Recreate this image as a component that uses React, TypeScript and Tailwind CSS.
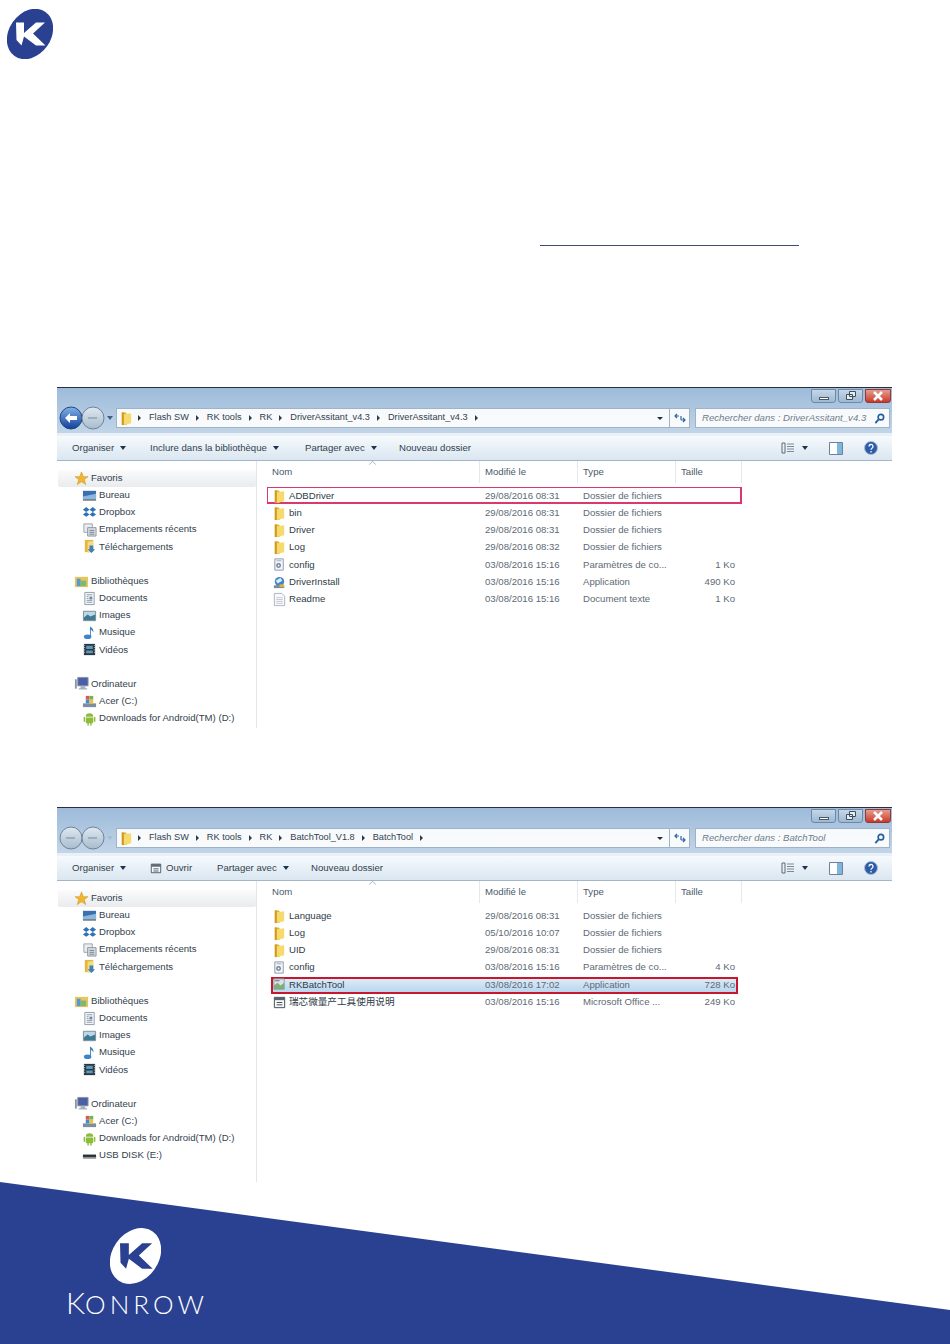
import type { ReactNode } from "react";

type IconName =
  | "folder" | "config" | "install" | "readme" | "exe" | "office"
  | "star" | "desktop" | "dropbox" | "recent" | "downloads"
  | "library" | "document" | "images" | "music" | "video"
  | "computer" | "drive" | "android" | "usb";

function Icon({ name }: { name: IconName }) {
  const shapes: Record<IconName, ReactNode> = {
    folder: (
      <>
        <path d="M3 1.500h4l1 1V15H3z" fill="#e3ae2c" />
        <path d="M5 3.500l8-1V13l-8 2z" fill="#f6da6e" />
        <path d="M3 1.500h2V15H3z" fill="#cf9a1c" />
      </>
    ),
    config: (
      <>
        <path d="M3 2h9v12H3z" fill="#f4f6f9" stroke="#8d98a6" />
        <circle cx="7" cy="9" r="2.600" fill="#6f83a0" />
        <circle cx="7" cy="9" r="1" fill="#fff" />
        <path d="M5 4h5" stroke="#9fabb8" />
      </>
    ),
    install: (
      <>
        <circle cx="8" cy="7" r="5" fill="#3f86c6" />
        <path d="M4 6l5-3 2 3-5 3z" fill="#dcecf8" />
        <path d="M2 11h11v3H2z" fill="#7a8b97" />
        <path d="M8 10h5v3H8z" fill="#d6b447" />
      </>
    ),
    readme: (
      <>
        <path d="M2.500 1.500h8l3 3v10h-11z" fill="#f8f9fb" stroke="#a9b2bd" />
        <path d="M4.500 6h7M4.500 8h7M4.500 10h7M4.500 12h7" stroke="#c3cad2" />
      </>
    ),
    exe: (
      <>
        <path d="M2 2h11v11H2z" fill="#d8e3ea" stroke="#8f9ba5" />
        <path d="M2 9l4-3 3 3 4-3v7H2z" fill="#7fae7b" />
        <path d="M3 4h5" stroke="#5d6b78" />
      </>
    ),
    office: (
      <>
        <path d="M2.500 2.500h11v11h-11z" fill="#f7f7f7" stroke="#3d4650" />
        <path d="M2.500 2.500h11v3h-11z" fill="#59636e" />
        <path d="M5 8h6M5 10.500h6" stroke="#3d4650" />
      </>
    ),
    star: <path d="M8 1l2 5h5l-4 3 1.500 5.500L8 11.500 3.500 14.500 5 9 1 6h5z" fill="#f0b62e" stroke="#c98a1a" strokeWidth="0.500" />,
    desktop: (
      <>
        <path d="M1 3h14v9H1z" fill="#3c6fae" />
        <path d="M1 9l14-3v6H1z" fill="#8db7dd" />
        <path d="M1 12h14v1.500H1z" fill="#5b6b7a" />
      </>
    ),
    dropbox: <path d="M4.500 2L1 5l3.500 2.500L1 10l3.500 2.500L8 10l3.500 2.500L15 10l-3.500-2.500L15 5l-3.500-3L8 5zM8 5l3.500 2.500L8 10 4.500 7.500z" fill="#2f72b8" fillRule="evenodd" />,
    recent: (
      <>
        <path d="M2 2h9v9H2z" fill="#e9edf0" stroke="#99a3ad" />
        <path d="M6 6h9v9H6z" fill="#d5dbe0" stroke="#8b96a0" />
        <path d="M8 9h5M8 11h5M8 13h5" stroke="#79858f" />
      </>
    ),
    downloads: (
      <>
        <path d="M3 1h9v13H3z" fill="#e4b840" />
        <path d="M6 3l6-1v11l-6 2z" fill="#f5dc80" />
        <path d="M8 7h4v4h2l-4 4-4-4h2z" fill="#3f80bf" />
      </>
    ),
    library: (
      <>
        <path d="M1 3h14v11H1z" fill="#e7c65c" />
        <path d="M3 5h4v8H3z" fill="#5a97cf" />
        <path d="M7 7h6v6H7z" fill="#7db77a" />
      </>
    ),
    document: (
      <>
        <path d="M3 1.500h10v13H3z" fill="#f2f5f8" stroke="#8e9aa8" />
        <path d="M5 4h6M5 6h2M5 8h2M5 10h6M5 12h6" stroke="#8e9aa8" />
        <path d="M8 6h3v3H8z" fill="#6488b0" />
      </>
    ),
    images: (
      <>
        <path d="M1.500 3.500h13v10h-13z" fill="#bcd7ea" stroke="#7d8b98" />
        <path d="M2 10l4-3 3 2 5-2v6H2z" fill="#3f7b8f" />
      </>
    ),
    music: (
      <>
        <ellipse cx="6" cy="12.500" rx="4" ry="2.500" fill="#3d85c4" />
        <path d="M8.500 12V1.500c2 1 4.500 3 3.500 6.500-.5-1.500-1.500-2.500-2.500-3V12z" fill="#3d85c4" />
      </>
    ),
    video: (
      <>
        <path d="M2 2h12v12H2z" fill="#2b3644" />
        <path d="M4.500 4h7v3.500h-7zM4.500 9h7v3h-7z" fill="#5c9ab8" />
        <path d="M2.800 3v10M13.200 3v10" stroke="#cfd7de" strokeDasharray="1 1.500" />
      </>
    ),
    computer: (
      <>
        <path d="M4 1.500h11v9H4z" fill="#4b5fa8" stroke="#8b95a3" />
        <path d="M1 3.500h2v10H1z" fill="#8b95a3" />
        <path d="M7 11h5v2h2v1.500H5V13h2z" fill="#a5aeb9" />
      </>
    ),
    drive: (
      <>
        <path d="M1 10h14v4H1z" fill="#7f8d9c" />
        <path d="M4 2h4v4H4z" fill="#e2574c" />
        <path d="M8 2h4v4H8z" fill="#72b451" />
        <path d="M4 6h4v4H4z" fill="#3f8cd0" />
        <path d="M8 6h4v4H8z" fill="#f0c33c" />
      </>
    ),
    android: (
      <>
        <path d="M4 6a4 3.500 0 0 1 8 0z" fill="#8dbb3a" />
        <path d="M4 6.800h8V12a1 1 0 0 1-1 1H5a1 1 0 0 1-1-1z" fill="#8dbb3a" />
        <path d="M2.500 7v4M13.500 7v4M6.500 13v2M9.500 13v2" stroke="#8dbb3a" strokeWidth="1.500" strokeLinecap="round" />
      </>
    ),
    usb: (
      <>
        <path d="M1 7h14v4H1z" fill="#2b2f33" />
        <path d="M1 9.500h14V11H1z" fill="#8b9298" />
      </>
    ),
  };
  return (
    <svg viewBox="0 0 16 16" className="w-[15px] h-[15px] shrink-0">
      {shapes[name]}
    </svg>
  );
}

function Caret() {
  return <span className="ml-[6px] inline-block border-x-[3.5px] border-t-[4px] border-x-transparent border-t-[#1e3350] align-middle" />;
}

function Crumb({ label }: { label: string }) {
  return (
    <div className="flex items-center">
      {label && <span className="mr-[7px] text-[9.2px]">{label}</span>}
      <span className="border-y-[3px] border-l-[3.5px] border-y-transparent border-l-[#2c3a48]" />
      <span className="w-[8px]" />
    </div>
  );
}

function NavCircle({ active }: { active: boolean }) {
  return (
    <svg viewBox="0 0 24 24" className="w-[24px] h-[24px] -mr-[2px] shrink-0">
      <defs>
        <linearGradient id="backBlue" x1="0" y1="0" x2="0" y2="1">
          <stop offset="0" stopColor="#7fb2e8" />
          <stop offset="1" stopColor="#123f9c" />
        </linearGradient>
        <linearGradient id="navGrey" x1="0" y1="0" x2="0" y2="1">
          <stop offset="0" stopColor="#dfe8f1" />
          <stop offset="1" stopColor="#a9bccd" />
        </linearGradient>
      </defs>
      <circle cx="12" cy="12" r="11" fill={active ? "url(#backBlue)" : "url(#navGrey)"} stroke={active ? "#24477d" : "#6f8398"} />
      {active ? (
        <path d="M6 12l5-5v3h7v4h-7v3z" fill="#fff" />
      ) : (
        <path d="M7 12h9" stroke="#8ea1b4" strokeWidth="1.500" />
      )}
    </svg>
  );
}

const sideGroups: { title: string; icon: IconName; items: [string, IconName][] }[] = [
  {
    title: "Favoris",
    icon: "star",
    items: [
      ["Bureau", "desktop"],
      ["Dropbox", "dropbox"],
      ["Emplacements récents", "recent"],
      ["Téléchargements", "downloads"],
    ],
  },
  {
    title: "Bibliothèques",
    icon: "library",
    items: [
      ["Documents", "document"],
      ["Images", "images"],
      ["Musique", "music"],
      ["Vidéos", "video"],
    ],
  },
  {
    title: "Ordinateur",
    icon: "computer",
    items: [
      ["Acer (C:)", "drive"],
      ["Downloads for Android(TM) (D:)", "android"],
    ],
  },
];

type FileRow = { name: string; icon: IconName; date: string; type: string; size?: string };

type ExplorerProps = {
  backActive: boolean;
  crumbs: string[];
  search: string;
  height: string;
  tools: ReactNode;
  files: FileRow[];
  extraDrive?: boolean;
  highlight: ReactNode;
};

const folderType = "Dossier de fichiers";

function Explorer({ backActive, crumbs, search, height, tools, files, extraDrive, highlight }: ExplorerProps) {
  return (
    <div className={`mx-[57px] w-[835px] shrink-0 flex flex-col text-[9.6px] text-[#33414d] ${height}`}>
      {/* title + address area */}
      <div className="h-[46px] border-t border-[#2c2f38] bg-gradient-to-b from-[#9dbbda] to-[#c2d5e8] flex flex-col">
        <div className="h-[17px] flex justify-end pt-[1px] pr-[1px]">
          <div className="h-[14px] flex gap-[2px]">
            <div className="w-[25px] rounded-b-[3px] border border-[#6c8aa8] bg-gradient-to-b from-[#c5d6e6] to-[#9db9d3] flex items-end justify-center pb-[2px]">
              <span className="w-[10px] h-[3px] bg-white border border-[#47586a]" />
            </div>
            <div className="w-[25px] rounded-b-[3px] border border-[#6c8aa8] bg-gradient-to-b from-[#c5d6e6] to-[#9db9d3] flex items-center justify-center">
              <svg viewBox="0 0 12 10" className="w-[12px] h-[10px]">
                <path d="M4.500 .5h6v5h-6zM1.500 3.500h6v5h-6z" fill="#e6eef5" stroke="#3e4e5f" />
              </svg>
            </div>
            <div className="w-[26px] rounded-b-[3px] border border-[#8e3a38] bg-gradient-to-b from-[#e59b8c] to-[#c8352a] flex items-center justify-center">
              <svg viewBox="0 0 12 10" className="w-[12px] h-[10px]">
                <path d="M2 1l8 8M10 1l-8 8" stroke="#fff" strokeWidth="2.500" />
              </svg>
            </div>
          </div>
        </div>
        <div className="h-[26px] flex items-center pl-[2px] pr-[2px]">
          <NavCircle active={backActive} />
          <NavCircle active={false} />
          <span className={`ml-[4px] mr-[3px] border-x-[3px] border-t-[4px] border-x-transparent ${backActive ? "border-t-[#3c5f86]" : "border-t-[#a8bccf]"}`} />
          <div className="h-[20px] flex-1 flex items-center bg-white/90 border border-[#9fb2c6]">
            <div className="ml-[2px] mr-[4px]">
              <Icon name="folder" />
            </div>
            <Crumb label="" />
            {crumbs.map((c, i) => (
              <Crumb key={c + i} label={c} />
            ))}
            <div className="flex-1" />
            <span className="mr-[6px] border-x-[3px] border-t-[3.5px] border-x-transparent border-t-[#22303e]" />
            <div className="w-[20px] h-full border-l border-[#9fb2c6] flex items-center justify-center">
              <svg viewBox="0 0 12 10" className="w-[12px] h-[10px]">
                <path d="M5 3H1.500M3 1L1 3l2 2" fill="none" stroke="#2d66a5" strokeWidth="1.200" />
                <path d="M7 7h3.500M9 5l2 2-2 2M7 3v4" fill="none" stroke="#2d66a5" strokeWidth="1.200" />
              </svg>
            </div>
          </div>
          <div className="ml-[5px] h-[20px] w-[195px] flex items-center justify-between pl-[6px] pr-[4px] bg-white/90 border border-[#9fb2c6] italic text-[#6f7d8a] whitespace-nowrap">
            <span>{search}</span>
            <svg viewBox="0 0 12 12" className="w-[11px] h-[11px] shrink-0">
              <circle cx="7.500" cy="4.500" r="3" fill="none" stroke="#245e9f" strokeWidth="1.800" />
              <path d="M5 7l-3.500 4" stroke="#245e9f" strokeWidth="2" />
            </svg>
          </div>
        </div>
      </div>
      <div className="h-[3px] bg-[#e9f0f7]" />
      {/* toolbar */}
      <div className="h-[25px] border-b border-[#a3b5c8] bg-gradient-to-b from-[#f6fafd] to-[#dae6f1] flex items-center pl-[15px] pr-[14px]">
        {tools}
        <div className="flex-1" />
        <svg viewBox="0 0 14 12" className="w-[14px] h-[12px]">
          <path d="M1 1h3v10H1z" fill="none" stroke="#5f6b77" />
          <path d="M6 2h7M6 4.500h7M6 7h7M6 9.500h7" stroke="#7d8a97" />
        </svg>
        <span className="mr-[21px] ml-[1px]"><Caret /></span>
        <svg viewBox="0 0 14 13" className="w-[14px] h-[13px] mr-[21px]">
          <path d="M.5.500h13v12H.5z" fill="#fff" stroke="#6d8296" />
          <path d="M8 1h5v11H8z" fill="#7fb6dc" />
        </svg>
        <svg viewBox="0 0 14 14" className="w-[14px] h-[14px]">
          <circle cx="7" cy="7" r="6.500" fill="#2c5ba8" stroke="#a8bdd6" />
          <path d="M5 5.500a2 2 0 1 1 3 1.700c-.7.400-1 .8-1 1.600M7 10v1.500" fill="none" stroke="#fff" strokeWidth="1.300" />
        </svg>
      </div>
      {/* body */}
      <div className="flex-1 flex min-h-0 bg-white">
        <div className="w-[200px] shrink-0 border-r border-[#e4e7ea] pt-[8.5px] pl-[1px]">
          {sideGroups.map((g, i) => (
            <div key={g.title} className="mb-[17px]">
              <div className={`h-[17.2px] flex items-center pl-[16px] gap-[2px] ${i === 0 ? "bg-gradient-to-b from-[#fbfbfb] to-[#e9ebee] rounded-[2px]" : ""}`}>
                <Icon name={g.icon} />
                <span>{g.title}</span>
              </div>
              {g.items.map(([label, icon]) => (
                <div key={label} className="h-[17.2px] flex items-center pl-[24px] gap-[2px]">
                  <Icon name={icon} />
                  <span className="whitespace-nowrap">{label}</span>
                </div>
              ))}
              {extraDrive && g.title === "Ordinateur" && (
                <div className="h-[17.2px] flex items-center pl-[24px] gap-[2px]">
                  <Icon name="usb" />
                  <span>USB DISK (E:)</span>
                </div>
              )}
            </div>
          ))}
        </div>
        <div className="flex-1 relative">
          {/* column headers */}
          <div className="h-[22px] grid grid-cols-[223px_98px_98px_66px] items-stretch text-[#4a5a68]">
            <div className="relative flex items-center pl-[15px] border-r border-[#e6e9ec]">
              Nom
              <svg viewBox="0 0 8 4" className="absolute left-[112px] top-0 w-[7px] h-[4px]">
                <path d="M0 4l4-4 4 4" fill="none" stroke="#9aa9b6" />
              </svg>
            </div>
            <div className="flex items-center pl-[5px] border-r border-[#e6e9ec]">Modifié le</div>
            <div className="flex items-center pl-[5px] border-r border-[#e6e9ec]">Type</div>
            <div className="flex items-center pl-[5px] border-r border-[#e6e9ec]">Taille</div>
          </div>
          <div className="relative mt-[4.5px]">
            {highlight}
            {files.map((f) => (
              <div key={f.name} className="relative h-[17.2px] grid grid-cols-[228px_98px_98px_54px] items-center">
                <div className="flex items-center pl-[15px] gap-[2px] whitespace-nowrap text-[#2f3c48]">
                  <Icon name={f.icon} />
                  <span>{f.name}</span>
                </div>
                <span className="text-[#5e6a75]">{f.date}</span>
                <span className="text-[#5e6a75] whitespace-nowrap">{f.type}</span>
                <span className="text-[#5e6a75] text-right">{f.size}</span>
              </div>
            ))}
          </div>
        </div>
      </div>
    </div>
  );
}

function Logo({ bg, fg, className }: { bg: string; fg: string; className: string }) {
  return (
    <svg viewBox="7 9 46 50" className={className}>
      <ellipse cx="30" cy="34" rx="21" ry="27" transform="rotate(35 30 34)" fill={bg} />
      <path d="M16 22.500h8v10.500l12-10.500h9L33 33.500 45.500 45.500h-9.500L24 36.500l-2.500 9L16.500 40z" fill={fg} />
    </svg>
  );
}

function Tool({ label, caret, icon, width }: { label: string; caret?: boolean; icon?: boolean; width: string }) {
  return (
    <div className={`flex items-center whitespace-nowrap ${width}`}>
      {icon && (
        <svg viewBox="0 0 14 14" className="w-[12px] h-[12px] mr-[4px]">
          <path d="M1.500 2.500h11v10h-11z" fill="#f4f6f8" stroke="#3f4c59" />
          <path d="M1.500 2.500h11v3h-11z" fill="#5c6a78" />
          <path d="M4 8h6M4 10.500h6" stroke="#3f4c59" />
        </svg>
      )}
      {label}
      {caret && <Caret />}
    </div>
  );
}

const firstFiles: FileRow[] = [
  { name: "ADBDriver", icon: "folder", date: "29/08/2016 08:31", type: folderType },
  { name: "bin", icon: "folder", date: "29/08/2016 08:31", type: folderType },
  { name: "Driver", icon: "folder", date: "29/08/2016 08:31", type: folderType },
  { name: "Log", icon: "folder", date: "29/08/2016 08:32", type: folderType },
  { name: "config", icon: "config", date: "03/08/2016 15:16", type: "Paramètres de co...", size: "1 Ko" },
  { name: "DriverInstall", icon: "install", date: "03/08/2016 15:16", type: "Application", size: "490 Ko" },
  { name: "Readme", icon: "readme", date: "03/08/2016 15:16", type: "Document texte", size: "1 Ko" },
];

const secondFiles: FileRow[] = [
  { name: "Language", icon: "folder", date: "29/08/2016 08:31", type: folderType },
  { name: "Log", icon: "folder", date: "05/10/2016 10:07", type: folderType },
  { name: "UID", icon: "folder", date: "29/08/2016 08:31", type: folderType },
  { name: "config", icon: "config", date: "03/08/2016 15:16", type: "Paramètres de co...", size: "4 Ko" },
  { name: "RKBatchTool", icon: "exe", date: "03/08/2016 17:02", type: "Application", size: "728 Ko" },
  { name: "瑞芯微量产工具使用说明", icon: "office", date: "03/08/2016 15:16", type: "Microsoft Office ...", size: "249 Ko" },
];

export default function App() {
  return (
    <div className="relative w-[950px] h-[1344px] overflow-hidden bg-white flex flex-col font-['Liberation_Sans','Noto_Sans_CJK_SC',sans-serif]">
      <div className="pt-[9px] pl-[7px]">
        <Logo bg="#2a4191" fg="#ffffff" className="w-[46px] h-[50px]" />
      </div>
      <div className="ml-[540px] mt-[186px] w-[259px] h-px bg-[#3e4a78]" />
      <div className="mt-[141px]">
        <Explorer
          backActive
          crumbs={["Flash SW", "RK tools", "RK", "DriverAssitant_v4.3", "DriverAssitant_v4.3"]}
          search="Rechercher dans : DriverAssitant_v4.3"
          height="h-[341px]"
          files={firstFiles}
          highlight={<div className="absolute left-[10px] top-[-0.5px] w-[475px] h-[17px] border border-[#d9396b] border-r-2 border-b-2" />}
          tools={
            <>
              <Tool label="Organiser" caret width="w-[78px]" />
              <Tool label="Inclure dans la bibliothèque" caret width="w-[155px]" />
              <Tool label="Partager avec" caret width="w-[94px]" />
              <Tool label="Nouveau dossier" width="" />
            </>
          }
        />
      </div>
      <div className="mt-[79px]">
        <Explorer
          backActive={false}
          crumbs={["Flash SW", "RK tools", "RK", "BatchTool_V1.8", "BatchTool"]}
          search="Rechercher dans : BatchTool"
          height="h-[375px]"
          files={secondFiles}
          extraDrive
          highlight={
            <div className="absolute left-[14px] top-[69.5px] w-[467px] h-[17px] border-2 border-[#c8162f] bg-gradient-to-b from-[#dcebf7] to-[#b9d6ee]" />
          }
          tools={
            <>
              <Tool label="Organiser" caret width="w-[78px]" />
              <Tool label="Ouvrir" icon width="w-[67px]" />
              <Tool label="Partager avec" caret width="w-[94px]" />
              <Tool label="Nouveau dossier" width="" />
            </>
          }
        />
      </div>
      <div className="flex-1 bg-[#2a4191] [clip-path:polygon(0_0,100%_79%,100%_100%,0_100%)] flex flex-col items-start pl-[66px] pt-[45px]">
        <Logo bg="#ffffff" fg="#2a4191" className="ml-[44px] w-[51px] h-[58px]" />
        <div className="mt-[2px] leading-none text-white font-['Lato',sans-serif] font-light whitespace-nowrap">
          <span className="text-[30px]">K</span>
          <span className="text-[26px] tracking-[4px]">ONROW</span>
        </div>
      </div>
    </div>
  );
}
